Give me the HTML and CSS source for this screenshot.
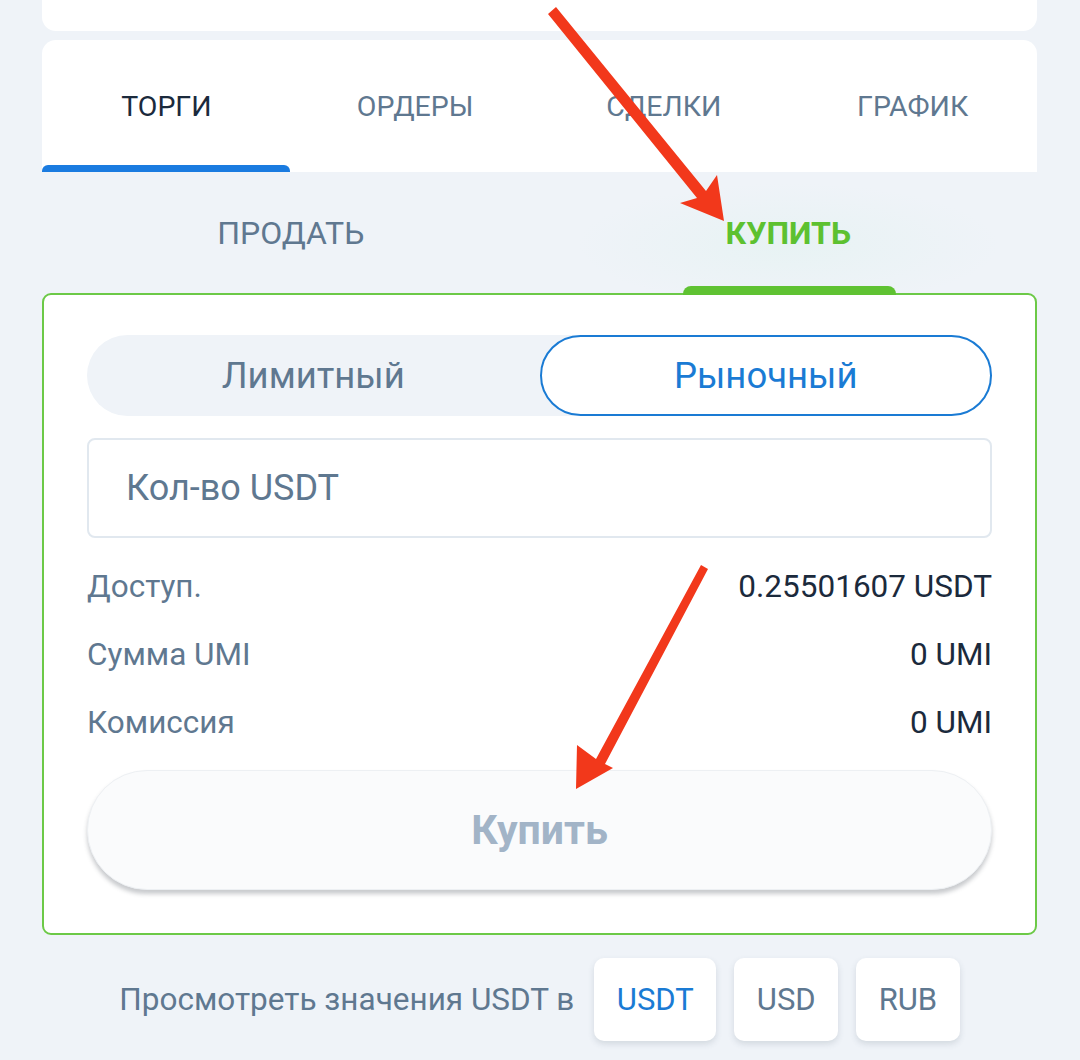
FILE: index.html
```html
<!DOCTYPE html>
<html lang="ru">
<head>
<meta charset="utf-8">
<title>Торги</title>
<link rel="stylesheet" href="styles.css">
</head>
<body>
<div class="page">
  <div class="top-card"></div>
  <div class="tabs-card">
    <div class="tab active">ТОРГИ</div>
    <div class="tab">ОРДЕРЫ</div>
    <div class="tab">СДЕЛКИ</div>
    <div class="tab">ГРАФИК</div>
  </div>
  <div class="side-tabs">
    <div class="side">ПРОДАТЬ</div>
    <div class="side buy">КУПИТЬ</div>
  </div>
  <div class="order-card">
    <div class="segment">
      <div class="seg-item">Лимитный</div>
      <div class="seg-item selected">Рыночный</div>
    </div>
    <div class="amount-input">Кол-во USDT</div>
    <div class="info-rows">
      <div class="info-row"><span class="label">Доступ.</span><span class="value">0.25501607 USDT</span></div>
      <div class="info-row"><span class="label">Сумма UMI</span><span class="value">0 UMI</span></div>
      <div class="info-row"><span class="label">Комиссия</span><span class="value">0 UMI</span></div>
    </div>
    <div class="buy-btn">Купить</div>
  </div>
  <div class="currency-row">
    <span class="currency-label">Просмотреть значения USDT в</span>
    <div class="cur-btn active">USDT</div>
    <div class="cur-btn">USD</div>
    <div class="cur-btn">RUB</div>
  </div>
</div>
<svg class="arrows" width="1080" height="1060" viewBox="0 0 1080 1060">
  <polygon fill="#f2381b" points="548,14 556,7 706,191 717,175 724,221 680,203 697,198"/>
  <polygon fill="#f2381b" points="701,565 708,569 605,764 613,768 576,789 577,745 596,759"/>
</svg>
</body>
</html>
```
FILE: styles.css
```css
* { box-sizing: border-box; }
html, body {
  margin: 0;
  padding: 0;
  background: #eff3f8;
  font-family: Roboto, "Noto Sans", sans-serif;
}
.page {
  width: 1080px;
  height: 1060px;
  padding: 0 43px 0 42px;
  overflow: hidden;
}
.top-card {
  height: 31px;
  background: #fff;
  border-radius: 0 0 14px 14px;
  margin-bottom: 9px;
}
.tabs-card {
  height: 132px;
  background: #fff;
  border-radius: 14px 14px 0 0;
  display: grid;
  grid-template-columns: repeat(4, 1fr);
}
.tab {
  display: flex;
  align-items: center;
  justify-content: center;
  font-size: 28.5px;
  color: #5f7890;
  position: relative;
}
.tab.active { color: #1b2a3c; }
.tab.active::after {
  content: "";
  position: absolute;
  left: 0;
  right: 1px;
  bottom: 0;
  height: 7px;
  background: #1a7be0;
  border-radius: 6px 6px 0 0;
}
.side-tabs {
  height: 121px;
  display: grid;
  grid-template-columns: 1fr 1fr;
}
.side {
  display: flex;
  align-items: center;
  justify-content: center;
  font-size: 32px;
  color: #5f7890;
  position: relative;
}
.side.buy {
  color: #5dc130;
  font-weight: 700;
  background: radial-gradient(ellipse at 50% 60%, rgba(205, 242, 228, 0.22), rgba(239,243,248,0) 60%);
}
.side.buy::after {
  content: "";
  position: absolute;
  left: 143px;
  width: 213px;
  bottom: -2px;
  height: 9px;
  background: #5fc232;
  border-radius: 8px 8px 0 0;
}
.order-card {
  background: #fff;
  border: 2px solid #6cc947;
  border-radius: 9px;
  padding: 40px 43px 43px;
}
.segment {
  height: 81px;
  background: #eff3f8;
  border-radius: 41px;
  display: grid;
  grid-template-columns: 1fr 1fr;
}
.seg-item {
  display: flex;
  align-items: center;
  justify-content: center;
  font-size: 36.5px;
  color: #5f7890;
  border-radius: 41px;
  padding-bottom: 1px;
}
.seg-item.selected {
  background: #fff;
  border: 2px solid #1a7bd4;
  color: #1a7bd4;
}
.amount-input {
  margin-top: 22px;
  height: 100px;
  border: 2px solid #e1e8ef;
  border-radius: 8px;
  display: flex;
  align-items: center;
  padding-left: 37px;
  font-size: 36px;
  color: #5f7890;
}
.info-rows {
  margin-top: 14px;
  display: flex;
  flex-direction: column;
}
.info-row {
  height: 68px;
  display: flex;
  justify-content: space-between;
  align-items: center;
  font-size: 31.5px;
}
.info-row .label { color: #5f7890; }
.info-row .value { color: #1b2a3c; }
.buy-btn {
  margin-top: 14px;
  height: 120px;
  border-radius: 60px;
  background: #fafbfc;
  border: 1px solid #edf0f3;
  box-shadow: 0 4px 4px rgba(60, 70, 80, 0.28);
  display: flex;
  align-items: center;
  justify-content: center;
  font-size: 41px;
  font-weight: 700;
  color: #a2b4c7;
}
.currency-row {
  margin-top: 23px;
  display: flex;
  justify-content: center;
  align-items: center;
  gap: 18px;
}
.currency-label {
  font-size: 31.5px;
  color: #5f7890;
  margin-right: 2px;
}
.cur-btn {
  height: 83px;
  padding: 0 22.5px;
  background: #fff;
  border-radius: 10px;
  box-shadow: 0 3px 6px rgba(60, 80, 100, 0.16);
  display: flex;
  align-items: center;
  justify-content: center;
  font-size: 31px;
  color: #5f7890;
}
.cur-btn.active { color: #1a7bd4; }
.arrows {
  position: absolute;
  left: 0;
  top: 0;
  pointer-events: none;
}
```
